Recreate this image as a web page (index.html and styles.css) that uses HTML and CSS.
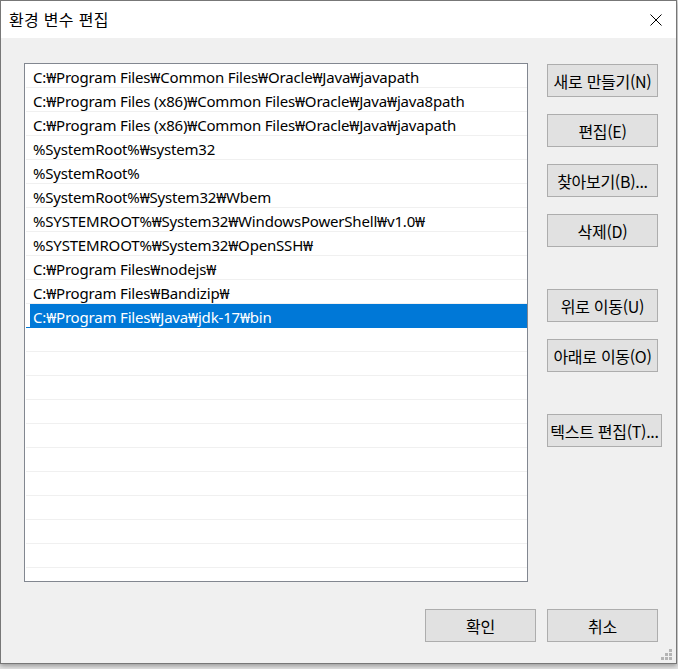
FILE: index.html
```html
<!DOCTYPE html>
<html lang="ko">
<head>
<meta charset="utf-8">
<title>환경 변수 편집</title>
<link rel="stylesheet" href="styles.css">
</head>
<body>
<div class="window">
  <div class="titlebar">
    <span class="title">환경 변수 편집</span>
    <svg class="close" width="12" height="12" viewBox="0 0 12 12"><path d="M0.5 0.5 L11.5 11.5 M11.5 0.5 L0.5 11.5" stroke="#000" stroke-width="1" fill="none"/></svg>
  </div>
  <div class="content">
    <div class="main">
      <div class="list">
        <div class="row">C:₩Program Files₩Common Files₩Oracle₩Java₩javapath</div>
        <div class="row">C:₩Program Files (x86)₩Common Files₩Oracle₩Java₩java8path</div>
        <div class="row">C:₩Program Files (x86)₩Common Files₩Oracle₩Java₩javapath</div>
        <div class="row">%SystemRoot%₩system32</div>
        <div class="row">%SystemRoot%</div>
        <div class="row">%SystemRoot%₩System32₩Wbem</div>
        <div class="row">%SYSTEMROOT%₩System32₩WindowsPowerShell₩v1.0₩</div>
        <div class="row">%SYSTEMROOT%₩System32₩OpenSSH₩</div>
        <div class="row">C:₩Program Files₩nodejs₩</div>
        <div class="row">C:₩Program Files₩Bandizip₩</div>
        <div class="row sel">C:₩Program Files₩Java₩jdk-17₩bin</div>
        <div class="row"></div><div class="row"></div><div class="row"></div>
        <div class="row"></div><div class="row"></div><div class="row"></div>
        <div class="row"></div><div class="row"></div><div class="row"></div>
        <div class="row"></div><div class="row"></div>
      </div>
      <div class="buttons">
        <div class="btn">새로 만들기(N)</div>
        <div class="btn">편집(E)</div>
        <div class="btn">찾아보기(B)...</div>
        <div class="btn">삭제(D)</div>
        <div class="btn sep">위로 이동(U)</div>
        <div class="btn">아래로 이동(O)</div>
        <div class="btn sep wide">텍스트 편집(T)...</div>
      </div>
    </div>
    <div class="footer">
      <div class="btn">확인</div>
      <div class="btn">취소</div>
    </div>
    <svg class="grip" width="11" height="11" viewBox="0 0 11 11">
      <rect x="8" y="0" width="3" height="3" fill="#b4b4b4"/>
      <rect x="4" y="4" width="3" height="3" fill="#b4b4b4"/>
      <rect x="8" y="4" width="3" height="3" fill="#b4b4b4"/>
      <rect x="0" y="8" width="3" height="3" fill="#b4b4b4"/>
      <rect x="4" y="8" width="3" height="3" fill="#b4b4b4"/>
      <rect x="8" y="8" width="3" height="3" fill="#b4b4b4"/>
    </svg>
  </div>
</div>
</body>
</html>
```

FILE: styles.css
```css
html, body {
  margin: 0;
  padding: 0;
}
body {
  background: #e6e6e6;
  width: 678px;
  height: 669px;
  overflow: hidden;
  font-family: "Noto Sans", "Noto Sans CJK KR", sans-serif;
  font-size: 15px;
  color: #000;
}
.window {
  width: 677px;
  height: 664px;
  box-sizing: border-box;
  border: 1px solid #777;
  background: #f0f0f0;
  box-shadow: 0 2px 5px rgba(0, 0, 0, 0.35);
  display: flex;
  flex-direction: column;
}
.titlebar {
  height: 37px;
  background: #fff;
  display: flex;
  align-items: center;
  justify-content: space-between;
  padding: 0 14px 0 8px;
  flex: none;
}
.title {
  font-family: "Noto Sans CJK KR", sans-serif;
  font-size: 16px;
  letter-spacing: 0.3px;
  padding-bottom: 1px;
}
.close {
  display: block;
  margin-bottom: 0;
}
.content {
  position: relative;
  flex: 1;
  padding: 25px 18px 0 23px;
}
.main {
  display: flex;
  align-items: flex-start;
  gap: 19px;
}
.list {
  width: 504px;
  height: 519px;
  box-sizing: border-box;
  border: 1px solid #828790;
  background: #fff;
  overflow: hidden;
  flex: none;
}
.row {
  height: 24px;
  box-sizing: border-box;
  border-bottom: 1px solid #f0f0f0;
  padding: 3px 0 0 7px;
  line-height: 20px;
  white-space: nowrap;
  margin-left: 1px;
  letter-spacing: -0.18px;
}
.row.sel {
  background: linear-gradient(to right, transparent 4px, #0078d7 4px);
  color: #fff;
  border-bottom-color: #0078d7;
}
.buttons {
  display: flex;
  flex-direction: column;
  align-items: flex-start;
  gap: 17px;
  padding-top: 1px;
}
.btn {
  width: 111px;
  height: 33px;
  box-sizing: border-box;
  border: 1px solid #adadad;
  background: #e1e1e1;
  display: flex;
  align-items: center;
  justify-content: center;
  font-family: "Noto Sans CJK KR", sans-serif;
  font-size: 16px;
  white-space: nowrap;
  letter-spacing: -0.3px;
}
.btn.sep {
  margin-top: 25px;
}
.btn.wide {
  width: 115px;
}
.footer {
  display: flex;
  justify-content: flex-end;
  gap: 11px;
  margin-top: 27px;
}
.grip {
  position: absolute;
  right: 4px;
  bottom: 3px;
}
```
